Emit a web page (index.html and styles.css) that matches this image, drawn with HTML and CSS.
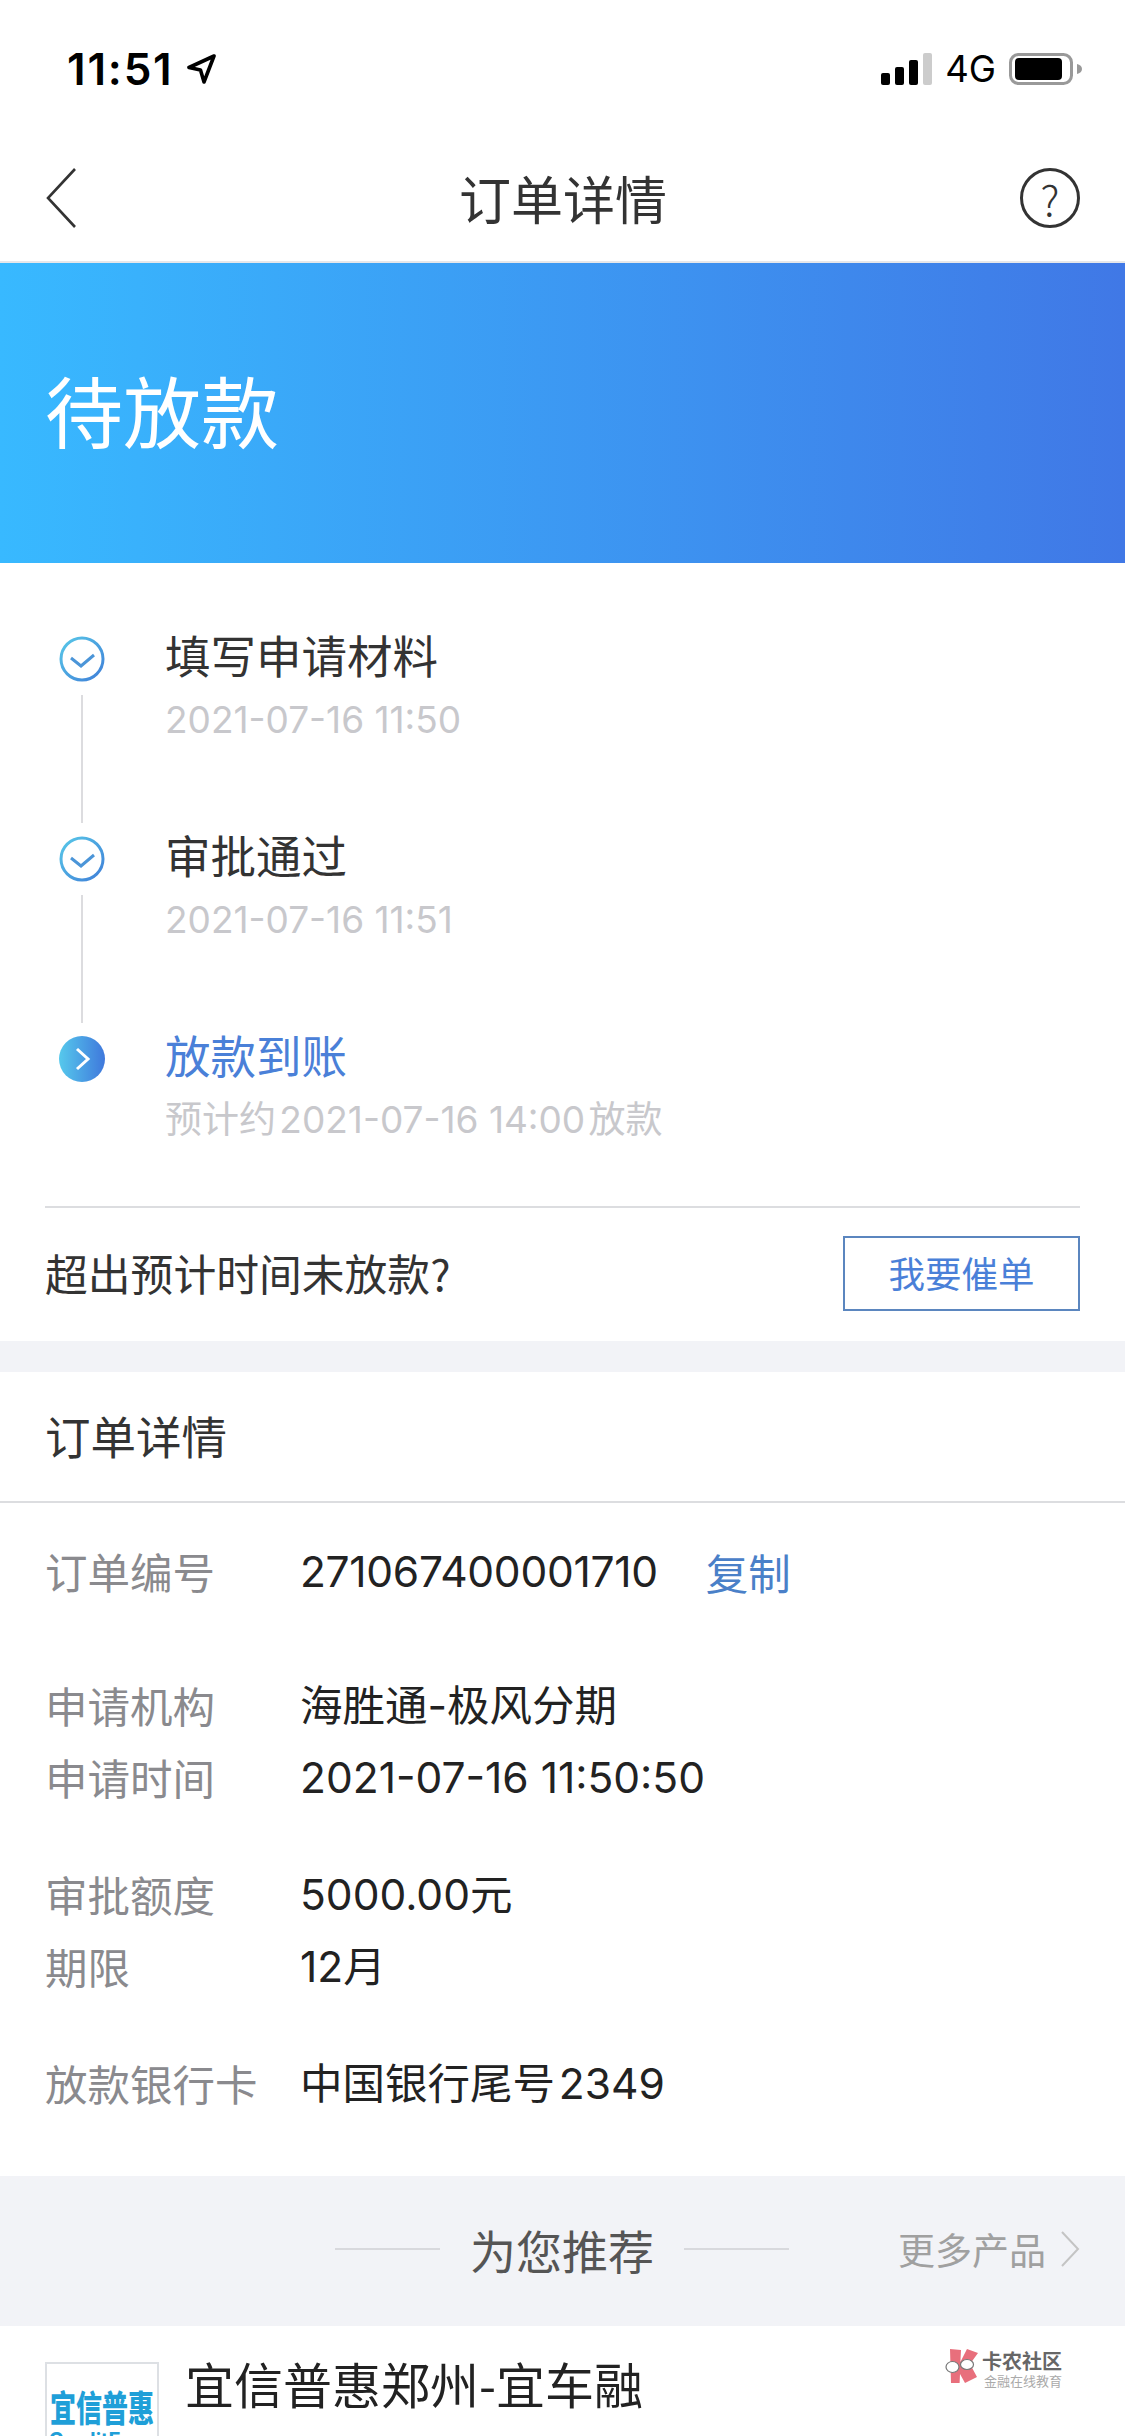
FILE: index.html
```html
<!DOCTYPE html>
<html lang="zh">
<head>
<meta charset="utf-8">
<title>订单详情</title>
<link rel="stylesheet" href="styles.css">
</head>
<body>
<div class="page">
  <div class="status">
    <div class="status-left"><span class="clock">11:51</span>
      <svg class="loc" width="30" height="30" viewBox="0 0 30 30"><path d="M28 2 3 13.500l11.500 2.500L18 28z" fill="none" stroke="#000" stroke-width="3.600" stroke-linejoin="round"/></svg>
    </div>
    <div class="status-right">
      <div class="bars"><i class="b1"></i><i class="b2"></i><i class="b3"></i><i class="b4"></i></div>
      <span class="net">4G</span>
      <svg class="batt" width="73" height="32" viewBox="0 0 73 32"><rect x="1.500" y="1.500" width="61" height="29" rx="8" fill="none" stroke="#999" stroke-width="3"/><rect x="6" y="5" width="47" height="22" rx="4" fill="#000"/><path d="M68 11c3 .6 5 2.500 5 5s-2 4.400-5 5z" fill="#999"/></svg>
    </div>
  </div>
  <header class="nav">
    <svg class="back" width="30" height="60" viewBox="0 0 30 60"><path d="M29 1 2 30l27 29" fill="none" stroke="#333" stroke-width="2.600"/></svg>
    <h1 class="nav-title">订单详情</h1>
    <div class="help">?</div>
  </header>
  <section class="banner">待放款</section>
  <section class="progress">
    <ol class="steps">
      <li class="step">
        <div class="rail">
          <svg class="node" width="46" height="46" viewBox="0 0 46 46"><defs><linearGradient id="g1" x1="0" y1="0" x2="1" y2="1"><stop offset="0" stop-color="#58c8e8"/><stop offset="1" stop-color="#3f7fd8"/></linearGradient></defs><circle cx="23" cy="23" r="21" fill="none" stroke="url(#g1)" stroke-width="3"/><path d="M12 22l10 8 13-11" fill="none" stroke="#4b95d8" stroke-width="3"/></svg>
          <div class="line"></div>
        </div>
        <div class="step-body"><div class="step-title">填写申请材料</div><div class="step-time">2021-07-16 11:50</div></div>
      </li>
      <li class="step">
        <div class="rail">
          <svg class="node" width="46" height="46" viewBox="0 0 46 46"><circle cx="23" cy="23" r="21" fill="none" stroke="url(#g1)" stroke-width="3"/><path d="M12 22l10 8 13-11" fill="none" stroke="#4b95d8" stroke-width="3"/></svg>
          <div class="line"></div>
        </div>
        <div class="step-body"><div class="step-title">审批通过</div><div class="step-time">2021-07-16 11:51</div></div>
      </li>
      <li class="step step-last">
        <div class="rail">
          <svg class="node" width="46" height="46" viewBox="0 0 46 46"><defs><linearGradient id="g2" x1="0" y1="0" x2="1" y2="0"><stop offset="0" stop-color="#56c9ec"/><stop offset="1" stop-color="#3f78dc"/></linearGradient></defs><circle cx="23" cy="23" r="23" fill="url(#g2)"/><path d="M18 13l11 10-11 10" fill="none" stroke="#fff" stroke-width="3"/></svg>
        </div>
        <div class="step-body"><div class="step-title step-active">放款到账</div><div class="step-time">预计约&#8202;2021-07-16 14:00&#8202;放款</div></div>
      </li>
    </ol>
    <div class="urge">
      <span class="urge-text">超出预计时间未放款?</span>
      <button class="urge-btn">我要催单</button>
    </div>
  </section>
  <section class="details">
    <h2 class="details-title">订单详情</h2>
    <div class="rows">
      <div class="row row-order"><span class="label">订单编号</span><span class="value value-num">271067400001710</span><span class="copy">复制</span></div>
      <div class="group">
        <div class="row"><span class="label">申请机构</span><span class="value">海胜通-极风分期</span></div>
        <div class="row"><span class="label">申请时间</span><span class="value">2021-07-16 11:50:50</span></div>
      </div>
      <div class="group">
        <div class="row"><span class="label">审批额度</span><span class="value">5000.00元</span></div>
        <div class="row"><span class="label">期限</span><span class="value">12月</span></div>
      </div>
      <div class="row"><span class="label">放款银行卡</span><span class="value">中国银行尾号&#8202;2349</span></div>
    </div>
  </section>
  <section class="recommend">
    <div class="rec-center"><i class="rec-line"></i><span class="rec-title">为您推荐</span><i class="rec-line"></i></div>
    <div class="rec-more"><span>更多产品</span><svg width="20" height="36" viewBox="0 0 20 36"><path d="M2 1l16 17L2 35" fill="none" stroke="#c4c4c4" stroke-width="2"/></svg></div>
  </section>
  <section class="product">
    <div class="thumb"><span class="thumb-name">宜信普惠</span><span class="thumb-sub">CreditEase</span></div>
    <div class="product-name">宜信普惠郑州-宜车融</div>
  </section>
  <div class="mark">
    <svg width="33" height="35" viewBox="0 0 33 35"><path d="M5 1l11 1-.6 12L22 1l11 4-8 11 7 13-12 6-5-9-.4 9H6z" fill="#e86f7c"/><ellipse cx="7.500" cy="19" rx="6.500" ry="5.500" fill="#fff" stroke="#777" stroke-width="1.200"/><ellipse cx="22" cy="16.500" rx="6.500" ry="5" fill="#fff" stroke="#777" stroke-width="1.200"/></svg>
    <div class="mark-text"><span class="mark-a">卡农社区</span><span class="mark-b">金融在线教育</span></div>
  </div>
</div>
</body>
</html>
```
FILE: styles.css
```css
* { box-sizing: border-box; margin: 0; padding: 0; }
html, body { background: #fff; }
body { font-family: Inter, "Noto Sans CJK SC", sans-serif; color: #333; }
.page { position: relative; width: 1125px; height: 2436px; overflow: hidden; background: #fff; }

.status { height: 88px; padding: 45px 43px 0 67px; display: flex; justify-content: space-between; align-items: flex-start; }
.status-left { display: flex; align-items: center; gap: 12px; }
.clock { font: 600 44px/48px Inter, sans-serif; color: #000; letter-spacing: 1.800px; }
.loc { display: block; }
.status-right { display: flex; align-items: center; height: 48px; }
.bars { display: flex; align-items: flex-end; gap: 5px; height: 32px; margin-right: 13px; }
.bars i { width: 9px; background: #000; border-radius: 2px; }
.b1 { height: 12px; } .b2 { height: 18px; } .b3 { height: 25px; }
.bars .b4 { height: 32px; background: #ccc; }
.net { font: 400 36.500px/48px Inter, sans-serif; color: #000; margin-right: 13px; }
.batt { display: block; }

.nav { height: 175px; padding: 46px 45px 0 46px; display: flex; align-items: center; justify-content: space-between; border-bottom: 2px solid #e6e7ea; }
.back { margin-right: 30px; flex: none; }
.nav-title { font: 400 52px/60px "Noto Sans CJK SC", sans-serif; color: #333; }
.help { width: 60px; height: 60px; border: 3px solid #333; border-radius: 50%; display: flex; align-items: center; justify-content: center; font: 300 42px/54px "Noto Sans CJK SC", sans-serif; color: #333; flex: none; }

.banner { height: 300px; padding: 0 0 8px 45px; display: flex; align-items: center; font: 400 78px/90px "Noto Sans CJK SC", sans-serif; color: #fff; background: linear-gradient(90deg, #38b9ff 0%, #4078e6 100%); }

.progress { padding: 73px 45px 0; height: 778px; }
.steps { list-style: none; height: 570px; }
.step { display: flex; height: 200px; }
.step-last { height: 170px; }
.rail { width: 120px; padding-left: 14px; display: flex; flex-direction: column; align-items: flex-start; flex: none; }
.node { display: block; flex: none; }
.line { width: 2px; height: 128px; margin: 13px 0 0 22px; background: #dcdcdf; }
.step-body { margin-top: -9px; }
.step-title { font: 400 45.500px/54px "Noto Sans CJK SC", sans-serif; color: #333; }
.step-active { color: #4a80d8; }
.step-time { font: 400 37px/44px Inter, "Noto Sans CJK SC", sans-serif; color: #c8c8cc; margin-top: 17px; }

.urge { height: 135px; padding-bottom: 3px; border-top: 2px solid #dcdde0; display: flex; align-items: center; justify-content: space-between; }
.urge-text { font: 400 42.800px/60px "Noto Sans CJK SC", sans-serif; color: #333; margin-top: -3px; }
.urge-btn { width: 237px; height: 75px; background: #fff; border: 2px solid #5b86bf; font: 400 36.500px/40px "Noto Sans CJK SC", sans-serif; color: #4a80d8; }

.details { background: #fff; border-top: 31px solid #f2f3f7; height: 835px; }
.details-title { height: 131px; padding: 0 0 4px 45px; display: flex; align-items: center; font: 400 45.500px/60px "Noto Sans CJK SC", sans-serif; color: #333; border-bottom: 2px solid #dcdde0; }
.rows { padding: 39px 45px 0; display: flex; flex-direction: column; gap: 57px; }
.row-order { margin-bottom: 17px; }
.group { display: flex; flex-direction: column; gap: 12px; }
.row { display: flex; align-items: center; height: 60px; }
.label { width: 255px; flex: none; font: 400 42.500px/60px "Noto Sans CJK SC", sans-serif; color: #8a8a8e; margin-top: -2px; }
.value { font: 400 42.500px/60px Inter, "Noto Sans CJK SC", sans-serif; color: #222; }
.value-num { letter-spacing: -0.300px; }
.copy { margin-left: 48px; font: 400 42.500px/60px "Noto Sans CJK SC", sans-serif; color: #4a80c8; }

.recommend { height: 150px; background: #f2f3f7; display: flex; align-items: center; position: relative; padding: 0 0 5px 335px; }
.rec-center { display: flex; align-items: center; gap: 30px; }
.rec-line { width: 105px; height: 2px; background: #d8d9dd; }
.rec-title { font: 400 46px/60px "Noto Sans CJK SC", sans-serif; color: #555; }
.rec-more { position: absolute; right: 45px; top: 53px; display: flex; align-items: center; gap: 14px; font: 400 37px/40px "Noto Sans CJK SC", sans-serif; color: #a0a0a0; }

.product { display: flex; align-items: flex-start; padding: 36px 45px 0; gap: 26px; }
.thumb { width: 114px; height: 150px; border: 2px solid #dde0e4; display: flex; flex-direction: column; align-items: center; padding-top: 31px; flex: none; }
.thumb-name { font: 900 26px/24px "Noto Sans CJK SC", sans-serif; color: #1f9fd8; white-space: nowrap; transform: scaleY(1.400); }
.thumb-sub { font: 700 20px/22px Inter, sans-serif; color: #1f9fd8; white-space: nowrap; margin-top: 10px; }
.product-name { font: 400 49px/60px "Noto Sans CJK SC", sans-serif; color: #222; margin-top: -9px; }

.mark { position: absolute; left: 945px; top: 2348px; display: flex; align-items: flex-start; gap: 4px; }
.mark-text { display: flex; flex-direction: column; align-items: flex-end; }
.mark-a { font: 700 20px/26px "Noto Sans CJK SC", sans-serif; color: #666; }
.mark-b { font: 400 13px/14px "Noto Sans CJK SC", sans-serif; color: #aaa; }
```
